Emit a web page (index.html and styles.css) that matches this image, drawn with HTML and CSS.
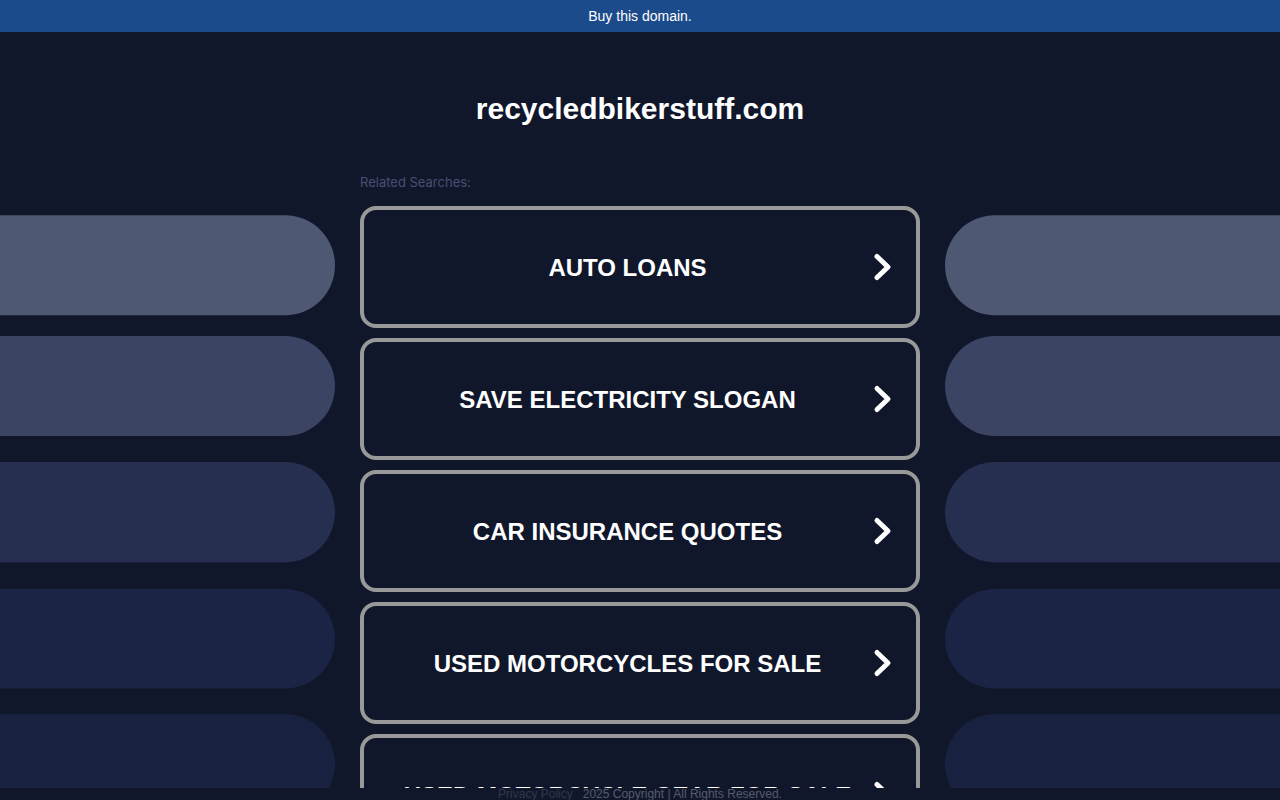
FILE: index.html
```html
<!DOCTYPE html>
<html lang="en">
<head>
    <meta charset="UTF-8">
    <meta name="viewport" content="width=device-width, initial-scale=1.0">
    <title>recycledbikerstuff.com</title>
    <link rel="stylesheet" href="styles.css">
</head>
<body>
    <a class="buy-bar" href="#">Buy this domain.</a>

    <div class="page">
        <div class="side side-left" aria-hidden="true">
            <svg class="pills" width="335" height="782" viewBox="0 32 335 782">
                <rect class="pill-1" x="-2000" y="215.3" width="2335" height="100" rx="50"/>
                <rect class="pill-2" x="-2000" y="336" width="2335" height="100" rx="50"/>
                <rect class="pill-3" x="-2000" y="462" width="2335" height="100.4" rx="50"/>
                <rect class="pill-4" x="-2000" y="589" width="2335" height="99.5" rx="50"/>
                <rect class="pill-5" x="-2000" y="714" width="2335" height="100" rx="50"/>
            </svg>
        </div>

        <main class="content">
            <h1>recycledbikerstuff.com</h1>
            <p class="label">Related Searches:</p>
            <nav class="links">
                <a class="card" href="#">
                    <span>AUTO LOANS</span>
                    <svg class="arrow" viewBox="0 0 25 30"><path d="M10 4.5L21 15L10 25.5"/></svg>
                </a>
                <a class="card" href="#">
                    <span>SAVE ELECTRICITY SLOGAN</span>
                    <svg class="arrow" viewBox="0 0 25 30"><path d="M10 4.5L21 15L10 25.5"/></svg>
                </a>
                <a class="card" href="#">
                    <span>CAR INSURANCE QUOTES</span>
                    <svg class="arrow" viewBox="0 0 25 30"><path d="M10 4.5L21 15L10 25.5"/></svg>
                </a>
                <a class="card" href="#">
                    <span>USED MOTORCYCLES FOR SALE</span>
                    <svg class="arrow" viewBox="0 0 25 30"><path d="M10 4.5L21 15L10 25.5"/></svg>
                </a>
                <a class="card" href="#">
                    <span>USED MOTORCYCLE GEAR FOR SALE</span>
                    <svg class="arrow" viewBox="0 0 25 30"><path d="M10 4.5L21 15L10 25.5"/></svg>
                </a>
            </nav>
        </main>

        <div class="side side-right" aria-hidden="true">
            <svg class="pills" width="335" height="782" viewBox="0 32 335 782">
                <rect class="pill-1" x="0" y="215.3" width="2335" height="100" rx="50"/>
                <rect class="pill-2" x="0" y="336" width="2335" height="100" rx="50"/>
                <rect class="pill-3" x="0" y="462" width="2335" height="100.4" rx="50"/>
                <rect class="pill-4" x="0" y="589" width="2335" height="99.5" rx="50"/>
                <rect class="pill-5" x="0" y="714" width="2335" height="100" rx="50"/>
            </svg>
        </div>
    </div>

    <footer class="footer">
        <a href="#">Privacy Policy</a>
        <span>2025 Copyright | All Rights Reserved.</span>
    </footer>
</body>
</html>
```
FILE: styles.css
```css
* {
    box-sizing: border-box;
}
body {
    margin: 0;
    height: 100vh;
    display: flex;
    flex-direction: column;
    background: #11172b;
    color: #fff;
    font-family: "Liberation Sans", Arial, sans-serif;
}
a {
    color: inherit;
    text-decoration: none;
}
.buy-bar {
    padding: 8px;
    background: #1b4b8a;
    font-size: 14px;
    line-height: 16px;
    text-align: center;
}
.page {
    flex: 1;
    min-height: 0;
    display: flex;
    justify-content: center;
    overflow-x: hidden;
    overflow-y: auto;
    scrollbar-width: none;
}

/* background pills on both sides */
.side {
    flex: 1 1 0;
    min-width: 0;
    display: flex;
}
.side-left {
    justify-content: flex-end;
    padding-right: 25px;
}
.side-right {
    padding-left: 25px;
}
.pills {
    flex: none;
    overflow: visible;
}
.pill-1 { fill: #4f5872; }
.pill-2 { fill: #3c4463; }
.pill-3 { fill: #262f4f; }
.pill-4 { fill: #1b2444; }
.pill-5 { fill: #192141; }

.content {
    width: 560px;
    max-width: 100%;
    padding-top: 60px;
}
h1 {
    margin: 0;
    font-size: 30px;
    line-height: 34px;
    text-align: center;
}
.label {
    margin: 48px 0 16px;
    color: #465072;
    font-family: Inter, sans-serif;
    font-size: 13px;
    line-height: 16px;
}
.links {
    display: flex;
    flex-direction: column;
    gap: 10px;
    padding-bottom: 24px;
}
.card {
    display: flex;
    align-items: center;
    min-height: 122px;
    padding: 0 24px;
    border: 4px solid #999;
    border-radius: 16px;
    font-size: 24px;
    font-weight: bold;
    line-height: 28px;
    text-align: center;
}
.card span {
    flex: 1;
    padding-top: 2px;
}
.arrow {
    flex: none;
    width: 25px;
    height: 30px;
    fill: none;
    stroke: #fff;
    stroke-width: 5;
    stroke-linecap: round;
    stroke-linejoin: round;
}

.footer {
    display: flex;
    justify-content: center;
    gap: 10px;
    color: #555b6b;
    font-size: 12px;
    line-height: 12px;
}
.footer a {
    color: #30374c;
}
```
